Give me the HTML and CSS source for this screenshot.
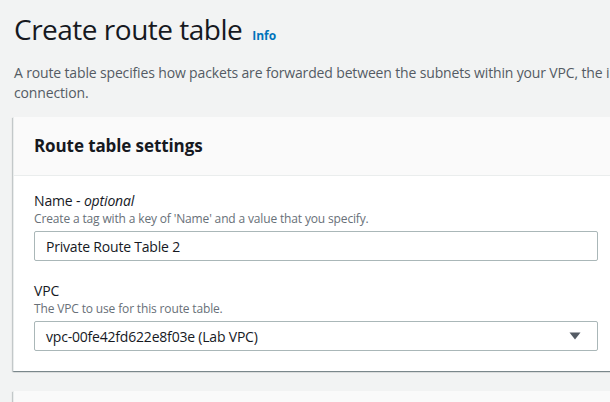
FILE: index.html
```html
<!DOCTYPE html>
<html>
<head>
<meta charset="utf-8">
<link rel="stylesheet" href="styles.css">
</head>
<body>
<div class="page">
  <div class="title-row">
    <h1 class="title">Create route table</h1>
    <a class="info">Info</a>
  </div>
  <p class="desc">A route table specifies how packets are forwarded between the subnets within your VPC, the internet, and your VPN connection.</p>
  <section class="card">
    <div class="card-header"><h2>Route table settings</h2></div>
    <div class="card-body">
      <div class="field">
        <div class="label">Name - <i>optional</i></div>
        <div class="hint">Create a tag with a key of 'Name' and a value that you specify.</div>
        <div class="input">Private Route Table 2</div>
      </div>
      <div class="field">
        <div class="label">VPC</div>
        <div class="hint">The VPC to use for this route table.</div>
        <div class="input select">
          <span>vpc-00fe42fd622e8f03e (Lab VPC)</span>
          <svg class="caret" width="12" height="8" viewBox="0 0 12 8"><path d="M0.5 0.5 H11.5 L6 7.5 Z" fill="#545b64"/></svg>
        </div>
      </div>
    </div>
  </section>
  <section class="card next"></section>
</div>
</body>
</html>
```
FILE: styles.css
```css
html, body { margin: 0; padding: 0; }
body {
  background: #f2f3f3;
  font-family: "Open Sans", "Noto Sans", sans-serif;
  color: #16191f;
  width: 610px;
  height: 402px;
  overflow: hidden;
}
.page {
  padding: 11px 0 0 13px;
  width: 800px;
}
.title-row {
  display: flex;
  align-items: baseline;
  gap: 10px;
  padding-left: 1px;
}
.title {
  margin: 0;
  font-weight: 400;
  font-size: 28px;
  line-height: 36px;
  letter-spacing: -0.5px;
}
.info {
  color: #0073bb;
  font-weight: 700;
  font-size: 12px;
}
.desc {
  margin: 16px 0 0 1px;
  font-size: 14px;
  line-height: 20px;
  color: #545b64;
  width: 790px;
  letter-spacing: -0.15px;
}
.card {
  margin-top: 14px;
  background: #fff;
  border-left: 1px solid #eaeded;
  box-shadow: 0 1px 1px 0 rgba(0,28,36,0.3), 1px 1px 1px 0 rgba(0,28,36,0.15), -1px 1px 1px 0 rgba(0,28,36,0.15);
  width: 640px;
}
.card-header {
  background: #fafafa;
  border-bottom: 1px solid #eaeded;
  height: 58px;
  display: flex;
  align-items: center;
  padding-left: 20px;
}
.card-header h2 {
  margin: 0;
  font-size: 17px;
  font-weight: 700;
  line-height: 22px;
  letter-spacing: -0.1px;
}
.card-body {
  padding: 15px 0 20px 20px;
  display: flex;
  flex-direction: column;
  gap: 20px;
}
.label {
  font-size: 14px;
  line-height: 20px;
  letter-spacing: -0.15px;
}
.hint {
  font-size: 12px;
  line-height: 16px;
  color: #687078;
  letter-spacing: -0.15px;
}
.input {
  margin-top: 4px;
  width: 564px;
  height: 30px;
  box-sizing: border-box;
  border: 1px solid #aab7b8;
  border-radius: 2px;
  background: #fff;
  padding: 0 11px;
  font-size: 14px;
  letter-spacing: -0.2px;
  display: flex;
  align-items: center;
}
.select {
  justify-content: space-between;
  padding-right: 16px;
}
.next {
  margin-top: 20px;
  height: 40px;
  background: #fafafa;
}
```
